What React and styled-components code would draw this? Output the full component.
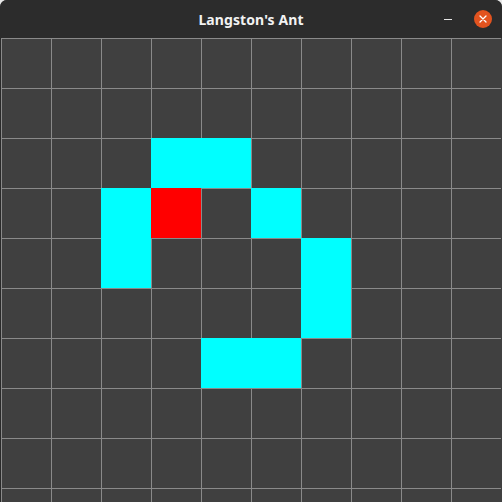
import React from 'react';
import styled, { createGlobalStyle } from 'styled-components';

const GlobalStyle = createGlobalStyle`
  html, body {
    margin: 0;
    padding: 0;
    background: #e8e8e8;
  }
`;

const CELL = 50;
const COLS = 10;
const ROWS = 10;

// ant trail: 'c' = cyan, 'r' = red (the ant)
const COLORED = {
  '2-3': 'c', '2-4': 'c',
  '3-2': 'c', '3-3': 'r', '3-5': 'c',
  '4-2': 'c', '4-6': 'c',
  '5-6': 'c',
  '6-4': 'c', '6-5': 'c',
};

const FILL = { c: '#00ffff', r: '#ff0000' };

const Window = styled.div`
  width: 502px;
  height: 502px;
  display: flex;
  flex-direction: column;
  background: #2a2a2a;
  border-radius: 7px 7px 0 0;
  overflow: hidden;
  font-family: 'Noto Sans', 'DejaVu Sans', sans-serif;
`;

const TitleBar = styled.div`
  height: 38px;
  flex-shrink: 0;
  display: grid;
  grid-template-columns: 1fr auto 1fr;
  align-items: center;
  background: #2c2c2c;
  color: #f2f2f2;
`;

const Title = styled.div`
  grid-column: 2;
  font-size: 14px;
  font-weight: 700;
  letter-spacing: 0.1px;
`;

const Controls = styled.div`
  grid-column: 3;
  justify-self: end;
  display: flex;
  align-items: center;
  gap: 22px;
  padding-right: 10px;
`;

const MinButton = styled.div`
  width: 8px;
  height: 1px;
  background: #e6e6e6;
  margin-top: 1px;
`;

const CloseButton = styled.div`
  width: 18px;
  height: 18px;
  border-radius: 50%;
  background: #e2531f;
  display: flex;
  align-items: center;
  justify-content: center;
`;

const Board = styled.div`
  flex: 1;
  overflow: hidden;
  padding-left: 1px;
  background: #2a2a2a;
`;

const Grid = styled.div`
  display: grid;
  grid-template-columns: repeat(${COLS}, ${CELL}px);
  grid-auto-rows: ${CELL}px;
  background: #404040;
`;

const Cell = styled.div`
  box-sizing: border-box;
  background: ${(p) => p.$fill || '#404040'};
  border-left: ${(p) => (p.$fill ? 'none' : '1px solid #8a8a8a')};
  border-top: ${(p) => (p.$fill ? 'none' : '1px solid #8a8a8a')};
`;

export default function App() {
  const cells = [];
  for (let r = 0; r < ROWS; r++) {
    for (let c = 0; c < COLS; c++) {
      const k = COLORED[`${r}-${c}`];
      cells.push(<Cell key={`${r}-${c}`} $fill={k ? FILL[k] : null} />);
    }
  }
  return (
    <>
      <GlobalStyle />
      <Window>
        <TitleBar>
          <Title>Langston's Ant</Title>
          <Controls>
            <MinButton />
            <CloseButton>
              <svg width="8" height="8" viewBox="0 0 8 8">
                <path d="M1 1 L7 7 M7 1 L1 7" stroke="#fff" strokeWidth="1.3" strokeLinecap="round" />
              </svg>
            </CloseButton>
          </Controls>
        </TitleBar>
        <Board>
          <Grid>{cells}</Grid>
        </Board>
      </Window>
    </>
  );
}
